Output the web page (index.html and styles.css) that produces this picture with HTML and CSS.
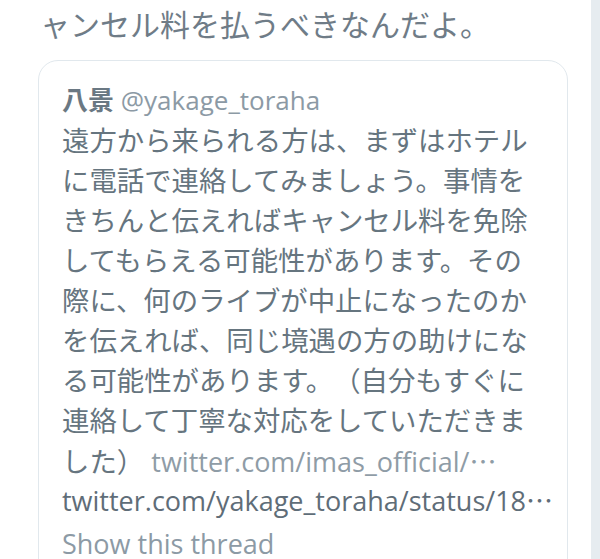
FILE: index.html
```html
<!DOCTYPE html>
<html lang="ja">
<head>
    <meta charset="UTF-8">
    <meta name="viewport" content="width=device-width, initial-scale=1.0">
    <title>八景 @yakage_toraha</title>
    <link rel="stylesheet" href="styles.css">
</head>
<body>
    <div class="pagina">
        <div class="tweet">
            <p class="tweet-texto">ャンセル料を払うべきなんだよ。</p>

            <div class="citado">
                <div class="autor">
                    <span class="nome">八景</span>
                    <span class="usuario">@yakage_toraha</span>
                </div>
                <p class="citado-texto">遠方から来られる方は、まずはホテルに電話で連絡してみましょう。事情をきちんと伝えればキャンセル料を免除してもらえる可能性があります。その際に、何のライブが中止になったのかを伝えれば、同じ境遇の方の助けになる可能性があります。（自分もすぐに連絡して丁寧な対応をしていただきました） <span class="link">twitter.com/imas_official/<span class="reticencias">…</span></span></p>
                <p class="citado-url">twitter.com/yakage_toraha/status/18<span class="reticencias">…</span></p>
                <p class="thread">Show this thread</p>
            </div>
        </div>
        <div class="lateral"></div>
    </div>
</body>
</html>
```

FILE: styles.css
```css
body {
    margin: 0;
    background: #fff;
    font-family: 'Open Sans', 'Noto Sans CJK JP', sans-serif;
    color: #66757f;
    overflow: hidden;
}

.pagina {
    display: flex;
    height: 559px;
}

.tweet {
    flex: 1;
    min-width: 0;
    padding-left: 38px;
    padding-right: 23px;
}

.lateral {
    width: 9px;
    background-color: #e6ecf0;
}

.tweet-texto {
    margin: 0;
    padding-left: 2px;
    font-size: 30px;
    line-height: 50px;
    color: #6f7c87;
    white-space: nowrap;
}

.citado {
    margin-top: 10px;
    border: 1.5px solid #e1e8ed;
    border-radius: 20px;
    padding: 18px 16px 30px 23px;
    height: 520px;
    box-sizing: border-box;
}

.autor {
    font-size: 26px;
    line-height: 42px;
}

.nome {
    font-weight: bold;
    color: #6a7883;
}

.usuario {
    color: #8c9aa5;
}

.citado-texto {
    margin: 0;
    padding-right: 14px;
    font-size: 27.4px;
    line-height: 40px;
    color: #66757f;
    text-spacing-trim: space-all;
}

.link {
    font-size: 27px;
    color: #8f9ca6;
}

/* reticencias centradas como na fonte japonesa */
.reticencias {
    font-family: 'Noto Sans CJK JP', sans-serif;
}

.citado-url {
    margin: 0;
    font-size: 27px;
    line-height: 36px;
    color: #5f6d78;
    white-space: nowrap;
}

.thread {
    margin: 5px 0 0;
    font-size: 27px;
    line-height: 40px;
    color: #8c9aa5;
}
```
